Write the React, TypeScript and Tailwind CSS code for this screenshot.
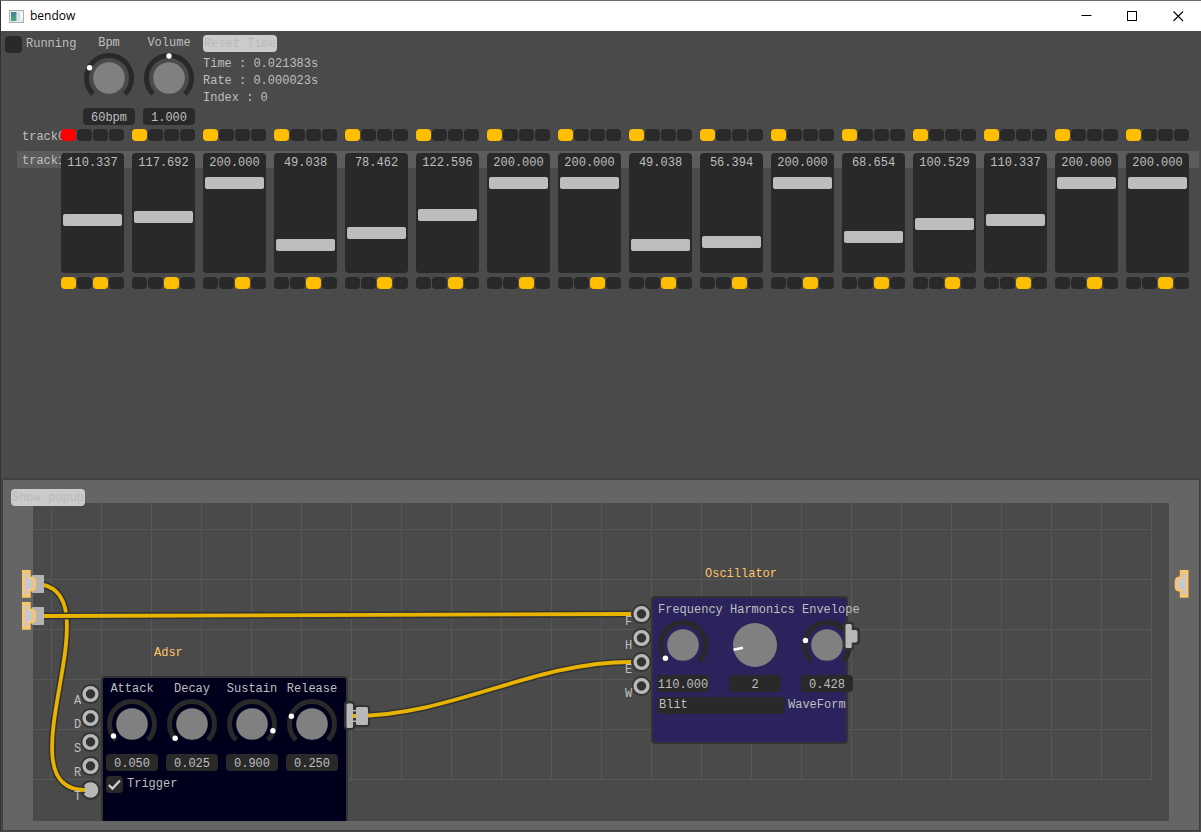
import React from "react";

type KnobProps = {
  id: string;
  label: string;
  value: string;
  fraction: number;
  kind?: "arc" | "tick";
  align?: "center" | "left";
};

const field =
  "block h-[17px] w-[52px] rounded bg-[#292929] pt-[2px] text-center leading-[15px] text-[#bfbfbf] outline-none";

function Knob({ id, label, value, fraction, kind = "arc", align = "center" }: KnobProps) {
  const angle = ((135 + fraction * 270) * Math.PI) / 180;
  const x = 26 + 22 * Math.cos(angle);
  const y = 25 + 22 * Math.sin(angle);
  return (
    <div className="flex w-[52px] shrink-0 flex-col">
      <label
        htmlFor={id}
        className={
          align === "center"
            ? "flex h-[18px] justify-center whitespace-nowrap leading-4"
            : "flex h-[18px] justify-start whitespace-nowrap pl-px leading-4"
        }
      >
        {label}
      </label>
      <svg className="mb-[5px] block h-[50px] w-[52px] overflow-visible" viewBox="0 0 52 50" aria-hidden="true">
        {kind === "arc" ? (
          <>
            <path d="M10.1 40.9 A22.5 22.5 0 1 1 41.9 40.9" fill="none" stroke="#292929" strokeWidth="5" />
            <circle cx="26" cy="25" r="15.8" fill="#808080" />
            <circle cx={x} cy={y} r="2.7" fill="#fff" />
          </>
        ) : (
          <>
            <circle cx="26" cy="25" r="22" fill="#808080" />
            <path d="M4.5 29.7 L14 27.8" stroke="#fff" strokeWidth="2.4" />
          </>
        )}
      </svg>
      <input id={id} type="text" defaultValue={value} className={field} />
    </div>
  );
}

function Steps({ name, active, current }: { name: string; active: number[]; current?: number }) {
  return (
    <div className="flex gap-px">
      {[0, 1, 2, 3].map((i) => (
        <input
          key={i}
          type="checkbox"
          aria-label={`${name} step ${i + 1}`}
          defaultChecked={active.includes(i)}
          className={
            i === current
              ? "h-3 min-w-0 flex-1 appearance-none rounded bg-[#ff0000]"
              : "h-3 min-w-0 flex-1 appearance-none rounded bg-[#292929] checked:bg-[#ffbf00]"
          }
        />
      ))}
    </div>
  );
}

const levels = [
  110.337, 117.692, 200, 49.038, 78.462, 122.596, 200, 200, 49.038, 56.394, 200, 68.654, 100.529, 110.337, 200, 200,
];

function TitleBar() {
  const control = "flex h-full w-[46px] items-center justify-center";
  return (
    <header className="flex h-[30px] items-center bg-white pl-2 text-black">
      <svg className="h-[13px] w-[15px]" viewBox="0 0 15 13" aria-hidden="true">
        <defs>
          <linearGradient id="app-icon" x1="0" y1="0" x2="0.6" y2="1">
            <stop offset="0" stopColor="#4a78a8" />
            <stop offset="1" stopColor="#4aa878" />
          </linearGradient>
        </defs>
        <rect x="0.5" y="0.5" width="14" height="12" fill="#eceff1" stroke="#a9b0b5" />
        <rect x="2" y="2" width="5.5" height="9" fill="url(#app-icon)" />
        <rect x="8.500" y="2" width="2.500" height="9" fill="#dcdfe1" />
        <rect x="12" y="2" width="1.5" height="6" fill="#fff" />
      </svg>
      <h1 className="ml-[6px] flex-1 font-['Open_Sans','Noto_Sans',sans-serif] text-[12px]">bendow</h1>
      <button type="button" aria-label="Minimize" className={control}>
        <svg className="size-[11px]" viewBox="0 0 11 11"><path d="M0.5 4.5h10" stroke="#000" /></svg>
      </button>
      <button type="button" aria-label="Maximize" className={control}>
        <svg className="size-[11px]" viewBox="0 0 11 11"><rect x="0.5" y="0.5" width="9" height="9" fill="none" stroke="#000" /></svg>
      </button>
      <button type="button" aria-label="Close" className={control}>
        <svg className="size-[11px]" viewBox="0 0 11 11"><path d="M0.5 0.5l9.500 9.500M10 0.5l-9.500 9.500" stroke="#000" strokeWidth="1.1" /></svg>
      </button>
    </header>
  );
}

const buttonClass = "h-[17px] rounded bg-[#cbcbcb] px-px pt-px leading-4 whitespace-nowrap text-[#bababa]";

function Toolbar() {
  return (
    <div className="flex items-start px-1 py-1">
      <label className="mr-2 flex w-[70px] items-center gap-1">
        <input type="checkbox" className="size-[17px] shrink-0 appearance-none rounded bg-[#292929]" />
        Running
      </label>
      <div className="flex gap-2">
        <Knob id="bpm" label="Bpm" value="60bpm" fraction={0.27} />
        <Knob id="volume" label="Volume" value="1.000" fraction={0.5} />
      </div>
      <div className="ml-2 flex flex-col items-start leading-[17px]">
        <button type="button" className={`${buttonClass} mb-1`}>Reset Time</button>
        <p>Time : 0.021383s</p>
        <p>Rate : 0.000023s</p>
        <p>Index : 0</p>
      </div>
    </div>
  );
}

function Sequencer() {
  return (
    <>
      <section className="flex pr-3 pl-[21px]">
        <h2 className="h-3 w-[39px] shrink-0 leading-4">track0</h2>
        <div className="z-10 flex flex-1 gap-2">
          {levels.map((_, i) => (
            <div key={i} className="min-w-0 flex-1">
              <Steps name={`track0 beat ${i + 1}`} active={[0]} current={i === 0 ? 0 : undefined} />
            </div>
          ))}
        </div>
      </section>
      <section className="relative mt-[10px] flex pr-3 pl-[21px]">
        <div className="absolute top-0 right-[2px] left-4 h-[17px] bg-[#5c5c5c]" />
        <h2 className="z-10 w-[39px] shrink-0 leading-5">track1</h2>
        <div className="z-10 flex flex-1 gap-2 pt-[2px]">
          {levels.map((level, i) => (
            <div key={i} className="relative flex min-w-0 flex-1 flex-col gap-1">
              <input
                id={`level-${i}`}
                type="range"
                min={0}
                max={255}
                step={0.001}
                defaultValue={level}
                className="m-0 block h-[120px] w-full appearance-none rounded bg-[#292929] p-[2px] [direction:rtl] [writing-mode:vertical-lr] [&::-webkit-slider-thumb]:h-3 [&::-webkit-slider-thumb]:w-[59px] [&::-webkit-slider-thumb]:appearance-none [&::-webkit-slider-thumb]:rounded-[2px] [&::-webkit-slider-thumb]:bg-[#bdbdbd]"
              />
              <label htmlFor={`level-${i}`} className="pointer-events-none absolute inset-x-0 top-[2px] text-center leading-4">
                {level.toFixed(3)}
              </label>
              <Steps name={`track1 beat ${i + 1}`} active={i === 0 ? [0, 2] : [2]} />
            </div>
          ))}
        </div>
      </section>
    </>
  );
}

function Jack({ x, y, filled }: { x: number; y: number; filled?: boolean }) {
  return (
    <g>
      <circle cx={x} cy={y} r="9.9" fill="#333" />
      {filled ? (
        <circle cx={x} cy={y} r="7.8" fill="#b8b8b8" />
      ) : (
        <circle cx={x} cy={y} r="6.4" fill="#333" stroke="#b8b8b8" strokeWidth="3.4" />
      )}
    </g>
  );
}

function Wire({ d }: { d: string }) {
  return (
    <g fill="none">
      <path d={d} stroke="#333" strokeWidth="7" />
      <path d={d} stroke="#e8b400" strokeWidth="3.8" />
    </g>
  );
}

const flange =
  "M1.3 1.4 H7.4 V7.5 H8.5 C11 7.5 12.5 9.3 12.5 11.5 V16.5 C12.5 18.8 11 20.4 8.5 20.4 H7.4 V26.4 H1.3 Z";

const envelopeKnobs = [
  { id: "attack", label: "Attack", value: "0.050", fraction: 0.045 },
  { id: "decay", label: "Decay", value: "0.025", fraction: 0.018 },
  { id: "sustain", label: "Sustain", value: "0.900", fraction: 0.9 },
  { id: "release", label: "Release", value: "0.250", fraction: 0.243 },
];

function PatchCanvas() {
  return (
    <div className="relative -mt-[3px] mr-[22px] ml-[22px] h-[318px] bg-[#4a4a4a]">
      <div className="absolute top-0 right-[17px] bottom-10 left-0 bg-[linear-gradient(to_right,#575757_1px,transparent_1px),linear-gradient(to_bottom,#575757_1px,transparent_1px)] bg-[size:50px_50px] bg-[position:18px_26px]" />

      <div className="absolute inset-0 overflow-hidden">
        <h3 className="absolute top-[143px] left-[121px] leading-[14px] text-[#ffc466]">Adsr</h3>
        <div className="absolute top-[173px] left-[68px] h-[160px] w-[247px] rounded border-2 border-[#333] bg-[#00001c] p-[3px]">
          <div className="flex gap-2">
            {envelopeKnobs.map((knob) => (
              <Knob key={knob.id} {...knob} />
            ))}
          </div>
          <label className="mt-1 flex w-fit items-center gap-1">
            <span className="grid size-[17px]">
              <input
                type="checkbox"
                defaultChecked
                className="peer col-start-1 row-start-1 size-[17px] appearance-none rounded bg-[#292929]"
              />
              <svg
                className="pointer-events-none invisible col-start-1 row-start-1 size-[17px] peer-checked:visible"
                viewBox="0 0 17 17"
                aria-hidden="true"
              >
                <path d="M2.8 9 L6.4 12.6 L14 4.4" fill="none" stroke="#d0d0d0" strokeWidth="2.2" />
              </svg>
            </span>
            Trigger
          </label>
        </div>
      </div>

      <h3 className="absolute top-[64px] left-[672px] leading-[14px] text-[#ffc466]">Oscillator</h3>
      <div className="absolute top-[93px] left-[618px] h-[148px] w-[197px] rounded border-2 border-[#333] bg-[#2a235c] p-1">
        <div className="flex gap-5">
          <Knob id="frequency" label="Frequency" value="110.000" fraction={0.03} align="left" />
          <Knob id="harmonics" label="Harmonics" value="2" fraction={0.1} kind="tick" align="left" />
          <Knob id="envelope" label="Envelope" value="0.428" fraction={0.21} align="left" />
        </div>
        <div className="mt-1 flex items-center gap-[3px]">
          <select
            id="waveform"
            defaultValue="Blit"
            className="h-[17px] w-32 shrink-0 appearance-none rounded bg-[#292929] px-[2px] leading-[17px] text-[#bfbfbf]"
          >
            <option>Blit</option>
            <option>Saw</option>
          </select>
          <label htmlFor="waveform">WaveForm</label>
        </div>
      </div>

      <svg className="pointer-events-none absolute inset-0 size-full overflow-visible" aria-label="Patch cables">
        <g transform="translate(-33 -503)">
          {[694, 718, 742, 766].map((y) => (
            <Jack key={y} x={90.5} y={y} />
          ))}
          <Jack x={90.5} y={790} filled />
          {[614, 638, 662, 686].map((y) => (
            <Jack key={y} x={641.5} y={y} />
          ))}
          <g fill="#333">
            <rect x="344" y="701" width="11" height="29" rx="3.5" />
            <rect x="352" y="705" width="18" height="22" rx="3" />
            <rect x="843" y="621.5" width="11" height="29" rx="3.5" />
            <rect x="848" y="627.5" width="12" height="17.500" rx="4" />
          </g>
          <g fill="#b8b8b8">
            <rect x="346.500" y="703.5" width="6.500" height="24.500" rx="1.500" />
            <rect x="352" y="710" width="5" height="12" />
            <rect x="845.5" y="624" width="6.3" height="24" rx="1.5" />
            <rect x="849" y="630" width="8.5" height="12.5" rx="2.2" />
          </g>
          <rect x="353" y="711.500" width="4" height="9" fill="#333" />
          <Wire d="M34 584 C121 584 -2 790 85 790" />
          <Wire d="M44 616 L631 614" />
          <Wire d="M353 716 C452 716 532 662 631 662" />
          <rect x="356" y="707" width="12" height="18" rx="1.5" fill="#b8b8b8" />
          <rect x="32" y="575" width="12" height="18" rx="1" fill="#b4b4b4" />
          <rect x="32" y="607" width="12" height="18" rx="1" fill="#b4b4b4" />
          <g fill="#c8c8c8" stroke="#ffc466" strokeWidth="2.6">
            <path d={flange} transform="translate(22 570)" />
            <path d={flange} transform="translate(22 602)" />
          </g>
        </g>
      </svg>
      <svg className="pointer-events-none absolute top-[67px] -right-5 h-7 w-[15px]" viewBox="0 0 15 28" aria-hidden="true">
        <path d={flange} transform="translate(14.500 0) scale(-1 1)" fill="#c8c8c8" stroke="#ffc466" strokeWidth="2.6" />
      </svg>

      <ul className="absolute top-[186px] left-[41px] leading-6">
        {["A", "D", "S", "R", "T"].map((port) => (
          <li key={port}>{port}</li>
        ))}
      </ul>
      <ul className="absolute top-[107px] left-[592px] leading-6">
        {["F", "H", "E", "W"].map((port) => (
          <li key={port}>{port}</li>
        ))}
      </ul>
    </div>
  );
}

export default function App() {
  return (
    <div className="flex min-h-screen flex-col border-t border-l border-t-[#6e6e6e] border-l-[#333] bg-[#4a4a4a] font-['Liberation_Mono',monospace] text-[12px] text-[#bfbfbf]">
      <TitleBar />
      <main className="flex flex-1 flex-col">
        <div className="flex-1">
          <Toolbar />
          <Sequencer />
        </div>
        <section className="mx-px mb-px border border-t-2 border-[#404040] bg-[#656565] px-2 py-[9px]">
          <button type="button" className={`${buttonClass} relative z-10 block`}>Show popup</button>
          <PatchCanvas />
        </section>
      </main>
    </div>
  );
}
